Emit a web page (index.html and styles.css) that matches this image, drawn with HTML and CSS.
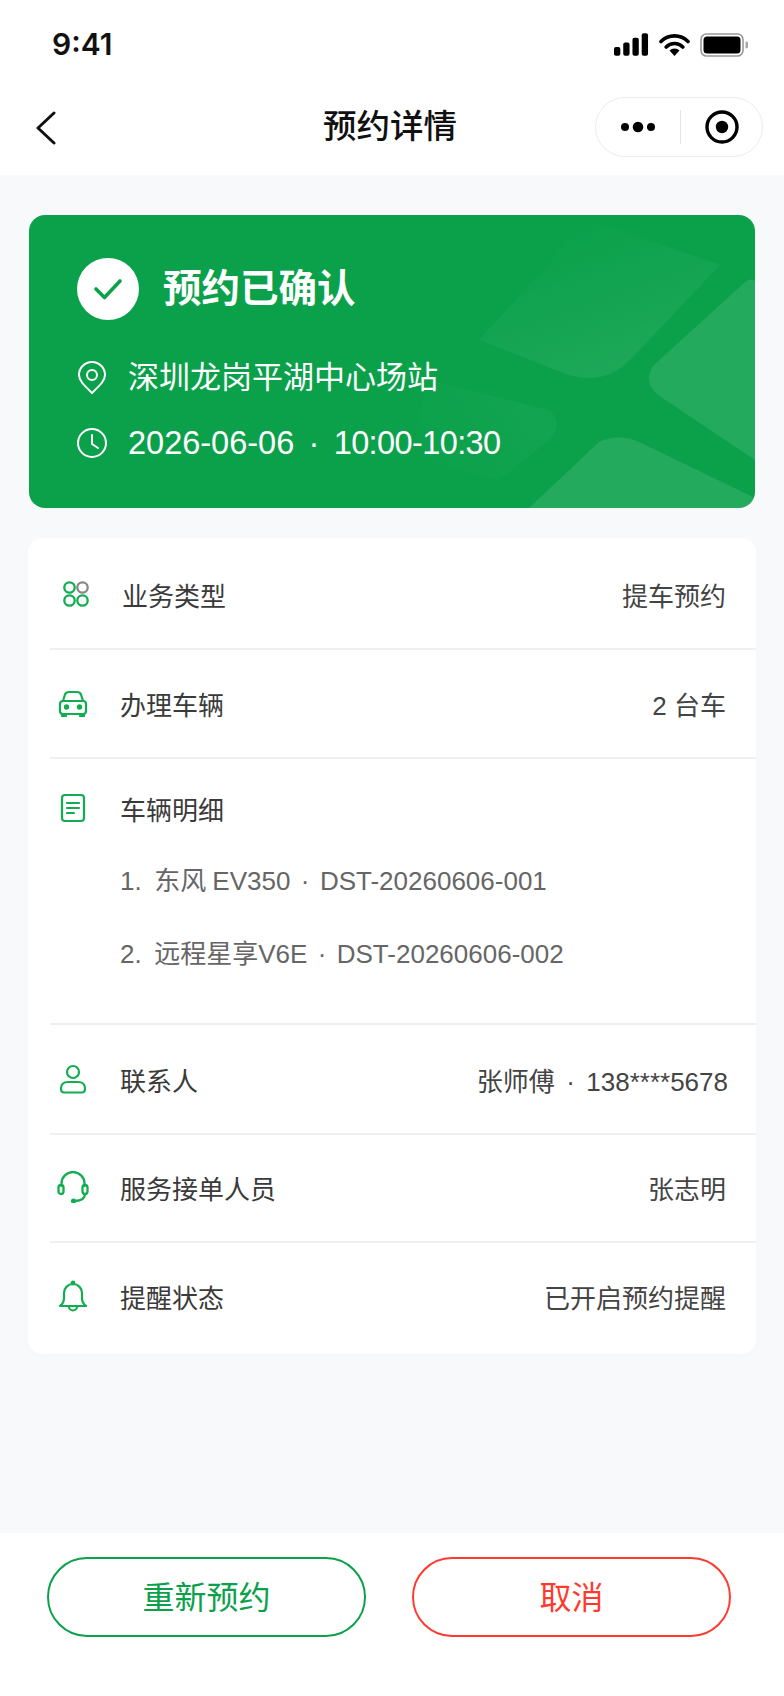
FILE: index.html
```html
<!DOCTYPE html>
<html lang="zh-CN">
<head>
  <meta charset="UTF-8">
  <meta name="viewport" content="width=device-width, initial-scale=1" />
  <title>预约详情</title>
  <link rel="stylesheet" href="styles.css">
</head>
<body>
  <header class="top">
    <div class="status-bar">
      <span class="clock">9:41</span>
      <div class="status-icons">
        <svg width="35" height="23" viewBox="0 0 36 23"><rect x="0" y="14" width="6.5" height="9" rx="2"/><rect x="9.5" y="9.5" width="6.5" height="13.5" rx="2"/><rect x="19" y="4.5" width="6.5" height="18.5" rx="2"/><rect x="28.5" y="0" width="6.5" height="23" rx="2"/></svg>
        <svg width="31" height="23" viewBox="0 0 31 23"><path d="M2 8.5a19 19 0 0 1 27 0M7.2 14a11.6 11.6 0 0 1 16.6 0" fill="none" stroke="#000" stroke-width="3.6" stroke-linecap="round"/><path d="M15.5 23l-5-5.400a7 7 0 0 1 10 0z"/></svg>
        <svg width="48" height="24" viewBox="0 0 48 24"><rect x="1" y="1" width="42" height="22" rx="5.500" fill="none" stroke="#9a9a9a" stroke-width="1.600"/><rect x="3.500" y="3.500" width="37" height="17" rx="3.500"/><path d="M45.500 8.500a3.500 3.500 0 0 1 0 7z" fill="#a8a8a8"/></svg>
      </div>
    </div>
    <nav class="nav">
      <svg class="back" width="22" height="34" viewBox="0 0 22 34"><path d="M19 2L3 17l16 15" fill="none" stroke="#111" stroke-width="3" stroke-linecap="round" stroke-linejoin="round"/></svg>
      <h1>预约详情</h1>
      <div class="capsule">
        <svg width="36" height="14" viewBox="0 0 36 14"><circle cx="5" cy="7" r="4"/><circle cx="18" cy="7" r="5.300"/><circle cx="31" cy="7" r="4"/></svg>
        <i class="capsule-line"></i>
        <svg width="36" height="36" viewBox="0 0 36 36"><circle cx="18" cy="18" r="15" fill="none" stroke="#000" stroke-width="3.400"/><circle cx="18" cy="18" r="6.200"/></svg>
      </div>
    </nav>
  </header>

  <main class="content">
    <section class="hero">
      <svg class="hero-bg" width="726" height="293" viewBox="0 0 726 293">
        <defs>
          <linearGradient id="fadeA" x1=".3" y1=".1" x2=".7" y2=".85"><stop offset="0" stop-color="#fff" stop-opacity="0"/><stop offset="1" stop-color="#fff" stop-opacity=".07"/></linearGradient>
          <linearGradient id="fadeB" x1="1" y1=".3" x2="0" y2=".7"><stop offset="0" stop-color="#fff" stop-opacity=".035"/><stop offset="1" stop-color="#fff" stop-opacity="0"/></linearGradient>
        </defs>
        <path d="M691 50L600 146Q575 170 540 160L450 125L560 5Z" fill="url(#fadeA)"/>
        <path d="M726 66Q721 62 715 68L625 150Q612 168 632 182L726 245Z" fill="#fff" fill-opacity=".1"/>
        <path d="M500 293L570 227Q590 218 610 227L726 283V293Z" fill="#fff" fill-opacity=".1"/>
        <path d="M400 165L520 195Q535 208 520 225L470 265L380 240Z" fill="url(#fadeB)"/>
      </svg>
      <div class="hero-title">
        <span class="check">
          <svg width="30" height="24" viewBox="0 0 30 24"><path d="M3 12l8.500 8.500L27 4" fill="none" stroke="#0ba14b" stroke-width="3.600" stroke-linecap="round" stroke-linejoin="round"/></svg>
        </span>
        <h2>预约已确认</h2>
      </div>
      <div class="hero-line first">
        <svg width="30" height="34" viewBox="0 0 30 34" fill="none" stroke="#fff" stroke-width="2"><path d="M15 32C8 25 2 20 2 14a13 13 0 0 1 26 0c0 6-6 11-13 18z" stroke-linejoin="round"/><circle cx="15" cy="14" r="5"/></svg>
        <span>深圳龙岗平湖中心场站</span>
      </div>
      <div class="hero-line hero-date">
        <svg width="30" height="32" viewBox="0 0 30 32" fill="none" stroke="#fff" stroke-width="2"><circle cx="15" cy="16" r="14"/><path d="M15 8v9l6 4" stroke-linecap="round" stroke-linejoin="round"/></svg>
        <span>2026-06-06<span class="sep">·</span><span class="time">10:00-10:30</span></span>
      </div>
    </section>

    <section class="details">
      <div class="row row-type">
        <span class="row-icon">
          <svg width="28" height="28" viewBox="0 0 28 28" fill="none" stroke="#12ad50" stroke-width="2.300"><circle cx="7.500" cy="7.500" r="5.200"/><circle cx="20.500" cy="7.500" r="5.200" stroke="#888"/><circle cx="7.500" cy="20.500" r="5.200"/><circle cx="20.500" cy="20.500" r="5.200"/></svg>
        </span>
        <span class="label label-shift">业务类型</span>
        <span class="value">提车预约</span>
      </div>
      <div class="row row-car">
        <span class="row-icon">
          <svg width="30" height="28" viewBox="0 0 30 28" fill="none" stroke="#12ad50" stroke-width="2.200" stroke-linejoin="round"><path d="M5 11l2-6.500Q8 2 11 2h8q3 0 4 2.500L25 11"/><rect x="2" y="11" width="26" height="13" rx="3"/><path d="M4 24v2h4v-2M22 24v2h4v-2"/><circle cx="8.500" cy="17" r="1.600" fill="#12ad50"/><circle cx="21.500" cy="17" r="1.600" fill="#12ad50"/></svg>
        </span>
        <span class="label">办理车辆</span>
        <span class="value">2 台车</span>
      </div>
      <div class="row-detail">
        <div class="row-detail-head">
          <span class="row-icon">
            <svg width="26" height="30" viewBox="0 0 26 30" fill="none" stroke="#12ad50" stroke-width="2.200" stroke-linecap="round"><rect x="2" y="2" width="22" height="26" rx="3"/><path d="M7 10h12M7 15h12M7 20h7"/></svg>
          </span>
          <span class="label">车辆明细</span>
        </div>
        <ol class="vehicles">
          <li>1.&nbsp; 东风 EV350<span class="sep">·</span>DST-20260606-001</li>
          <li>2.&nbsp; 远程星享V6E<span class="sep">·</span>DST-20260606-002</li>
        </ol>
      </div>
      <div class="row row-contact">
        <span class="row-icon">
          <svg width="28" height="30" viewBox="0 0 28 30" fill="none" stroke="#12ad50" stroke-width="2.200"><circle cx="14" cy="8" r="6"/><path d="M2 24.500Q2 18 9 18h10q7 0 7 6.500v0q0 4-3 4H5q-3 0-3-4z"/></svg>
        </span>
        <span class="label">联系人</span>
        <span class="value">张师傅<span class="sep">·</span>138****5678</span>
      </div>
      <div class="row row-staff">
        <span class="row-icon">
          <svg width="32" height="32" viewBox="0 0 32 32" fill="none" stroke="#12ad50" stroke-width="2.300" stroke-linecap="round"><path d="M4.500 15v-2.500a11.500 11.500 0 0 1 23 0V15"/><rect x="1.500" y="14" width="5" height="9" rx="2.500"/><rect x="25.500" y="14" width="5" height="9" rx="2.500"/><path d="M28 23q0 6.500-10 7"/><circle cx="16.500" cy="30" r="1.400" fill="#12ad50"/></svg>
        </span>
        <span class="label">服务接单人员</span>
        <span class="value">张志明</span>
      </div>
      <div class="row row-remind">
        <span class="row-icon">
          <svg width="30" height="32" viewBox="0 0 30 32" fill="none" stroke="#12ad50" stroke-width="2.200" stroke-linejoin="round"><path d="M2 26q4-3 4-8v-5a9 9 0 0 1 18 0v5q0 5 4 8z"/><path d="M11 26.500a4 4 0 0 0 8 0"/><circle cx="15" cy="3" r="1.300" fill="#12ad50"/></svg>
        </span>
        <span class="label">提醒状态</span>
        <span class="value">已开启预约提醒</span>
      </div>
    </section>
  </main>

  <footer class="actions">
    <button type="button" class="btn btn-green">重新预约</button>
    <button type="button" class="btn btn-red">取消</button>
  </footer>
</body>
</html>
```

FILE: styles.css
```css
* {
  box-sizing: border-box;
}
body {
  margin: 0;
  width: 784px;
  height: 1696px;
  display: flex;
  flex-direction: column;
  background: #f8f9fb;
  font-family: "Liberation Sans", "Noto Sans CJK SC", sans-serif;
  color: #3a3a3a;
  overflow: hidden;
}
.top {
  height: 175px;
  background: #fff;
}
.status-bar {
  height: 88px;
  padding: 26px 36px 0 52px;
  display: flex;
  justify-content: space-between;
  align-items: flex-start;
}
.clock {
  font-family: Inter, "Liberation Sans", sans-serif;
  font-size: 30px;
  font-weight: 600;
  line-height: 36px;
  color: #111;
}
.status-icons {
  display: flex;
  gap: 10px;
  padding-top: 7px;
}
.nav {
  height: 78px;
  padding: 9px 21px 0 17px;
  display: grid;
  grid-template-columns: 1fr auto 1fr;
  align-items: start;
}
.back {
  margin: 14px 0 0 18px;
}
.nav h1 {
  margin: 0;
  font-size: 33.5px;
  font-weight: 500;
  line-height: 60px;
  color: #111;
}
.capsule {
  justify-self: end;
  width: 168px;
  height: 60px;
  border: 1px solid #ececec;
  border-radius: 30px;
  display: flex;
  align-items: center;
  padding: 0 22px 0 24px;
  justify-content: space-between;
}
.capsule-line {
  width: 1px;
  height: 34px;
  background: #e4e4e4;
}
.content {
  flex: 1;
  padding: 40px 28px 0;
}
.hero {
  position: relative;
  margin-left: 1px;
  height: 293px;
  width: 726px;
  border-radius: 16px;
  background: #0ba14b;
  color: #fff;
  padding: 43px 0 0 48px;
  overflow: hidden;
}
.hero-bg {
  position: absolute;
  left: 0;
  top: 0;
}
.hero-title,
.hero-line {
  position: relative;
  display: flex;
  align-items: center;
}
.hero-title {
  height: 62px;
  gap: 24px;
}
.check {
  width: 62px;
  height: 62px;
  border-radius: 50%;
  background: #fff;
  display: flex;
  align-items: center;
  justify-content: center;
}
.hero-title h2 {
  margin: 0;
  font-size: 38.5px;
  font-weight: 700;
  line-height: 64px;
}
.hero-line {
  height: 40px;
  gap: 21px;
  font-size: 31px;
  line-height: 40px;
}
.hero-line.first {
  margin-top: 38px;
}
.hero-date {
  margin-top: 25px;
  font-size: 32.5px;
}
.time {
  letter-spacing: -0.6px;
}
.sep {
  margin: 0 0.44em;
}
.details {
  margin-top: 30px;
  height: 816px;
  background: #fff;
  border-radius: 14px;
  box-shadow: 0 2px 10px rgba(0, 0, 0, 0.02);
  padding-left: 22px;
}
.row {
  display: flex;
  align-items: center;
  font-size: 26px;
  border-bottom: 2px solid #eeeff1;
}
.row-type {
  height: 112px;
  padding-top: 2px;
}
.row-type .row-icon {
  padding-left: 6px;
}
.row-car {
  height: 109px;
}
.row-contact {
  height: 112px;
  border-top: 2px solid #eeeff1;
}
.row-contact .value {
  margin-right: 28px;
}
.row-staff {
  height: 108px;
  padding-bottom: 2px;
}
.row-remind {
  height: 111px;
  padding-bottom: 5px;
  border-bottom: 0;
}
.row-icon {
  width: 46px;
  margin-right: 24px;
  display: flex;
  justify-content: center;
  align-items: center;
}
.label {
  flex: 1;
}
.label-shift {
  margin-left: 2px;
}
.value {
  margin-right: 30px;
  color: #444;
}
.row-detail {
  height: 264px;
  font-size: 26px;
  padding-top: 27px;
}
.row-detail-head {
  display: flex;
  align-items: center;
  height: 44px;
}
.vehicles {
  list-style: none;
  margin: 0;
  padding: 0 0 0 70px;
  color: #666;
  word-spacing: -1px;
}
.vehicles .sep {
  margin: 0 0.4em;
}
.vehicles li {
  height: 73px;
  line-height: 73px;
}
.vehicles li:first-child {
  margin-top: 15px;
}
.actions {
  height: 163px;
  background: #fff;
  padding: 24px 53px 0 47px;
  display: flex;
  justify-content: space-between;
  align-items: flex-start;
}
.btn {
  width: 319px;
  height: 80px;
  border-radius: 40px;
  background: #fff;
  font-family: inherit;
  font-size: 32px;
  padding: 0 0 5px;
}
.btn-green {
  border: 2px solid #0ba14b;
  color: #0ba14b;
}
.btn-red {
  border: 2px solid #ff3b30;
  color: #ff3b30;
}
```
